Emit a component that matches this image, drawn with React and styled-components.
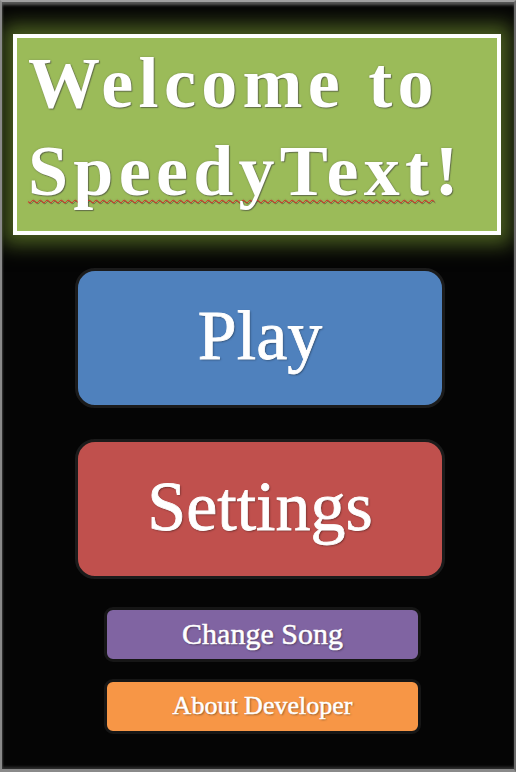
import React from "react";
import styled, { createGlobalStyle } from "styled-components";

const Global = createGlobalStyle`
  html, body { margin: 0; padding: 0; background: #050505; }
  body { font-family: "Liberation Serif", "Times New Roman", serif; }
`;

const Frame = styled.div`
  box-sizing: border-box;
  width: 516px;
  height: 772px;
  background: #050505;
  border-top: 2px solid #a0a0a0;
  border-left: 2px solid #8a8a8a;
  border-right: 2px solid #6a6a6a;
  border-bottom: 3px solid #8a8a8a;
  box-shadow: inset 0 4px 3px -1px #5a5a5a, inset 2px 0 2px -1px #333, inset 0 -3px 3px -1px #333;
  display: flex;
  flex-direction: column;
  align-items: center;
  padding-top: 32px;
  overflow: hidden;
`;

const TitleBox = styled.div`
  box-sizing: border-box;
  width: 488px;
  height: 201px;
  margin-left: -2px;
  background: #9bbb59;
  border: 4px solid #ffffff;
  box-shadow: 0 0 18px 10px #485b20;
  padding: 1px 0 0 11px;
`;

const Title = styled.h1`
  margin: 0;
  font-family: "Liberation Serif", "Times New Roman", serif;
  font-weight: 700;
  font-size: 72px;
  line-height: 88px;
  letter-spacing: 5.3px;
  color: #ffffff;
  text-shadow: 1px 1px 1px rgba(60, 60, 60, 0.55), 0 0 2px rgba(80, 80, 80, 0.4);
`;

const Misspelled = styled.span`
  text-decoration: underline wavy #e02020;
  text-decoration-thickness: 1px;
  text-underline-offset: 4px;
  text-decoration-skip-ink: none;
`;

const BigButton = styled.button`
  box-sizing: border-box;
  width: 370px;
  height: 140px;
  margin-left: 4px;
  margin-top: ${(p) => p.$mt}px;
  background: ${(p) => p.$bg};
  border: 3px solid #1b1b1b;
  border-radius: 20px;
  color: #fff;
  font-family: "Liberation Serif", "Times New Roman", serif;
  font-size: 70px;
  line-height: 1;
  padding: 0 0 4px;
  display: flex;
  align-items: center;
  justify-content: center;
  -webkit-text-stroke: 0.8px #fff;
  text-shadow: 1px 1px 2px rgba(0, 0, 0, 0.45);
  cursor: pointer;
`;

const SmallButton = styled.button`
  box-sizing: border-box;
  width: 317px;
  height: 55px;
  margin-left: 9px;
  margin-top: ${(p) => p.$mt}px;
  background: ${(p) => p.$bg};
  border: 3px solid #161616;
  border-radius: 9px;
  color: #fff;
  font-family: "Liberation Serif", "Times New Roman", serif;
  font-size: ${(p) => p.$fs}px;
  line-height: 1;
  padding: 0 0 2px;
  display: flex;
  align-items: center;
  justify-content: center;
  -webkit-text-stroke: 0.5px #fff;
  text-shadow: 1px 1px 2px rgba(0, 0, 0, 0.45);
  cursor: pointer;
`;

export default function App() {
  return (
    <>
      <Global />
      <Frame>
        <TitleBox>
          <Title>
            Welcome to
            <br />
            <Misspelled>SpeedyText</Misspelled>!
          </Title>
        </TitleBox>
        <BigButton $bg="#4f81bd" $mt={33}>Play</BigButton>
        <BigButton $bg="#c0504d" $mt={31}>Settings</BigButton>
        <SmallButton $bg="#8064a2" $mt={28} $fs={30}>Change Song</SmallButton>
        <SmallButton $bg="#f79646" $mt={17} $fs={26}>About Developer</SmallButton>
      </Frame>
    </>
  );
}
